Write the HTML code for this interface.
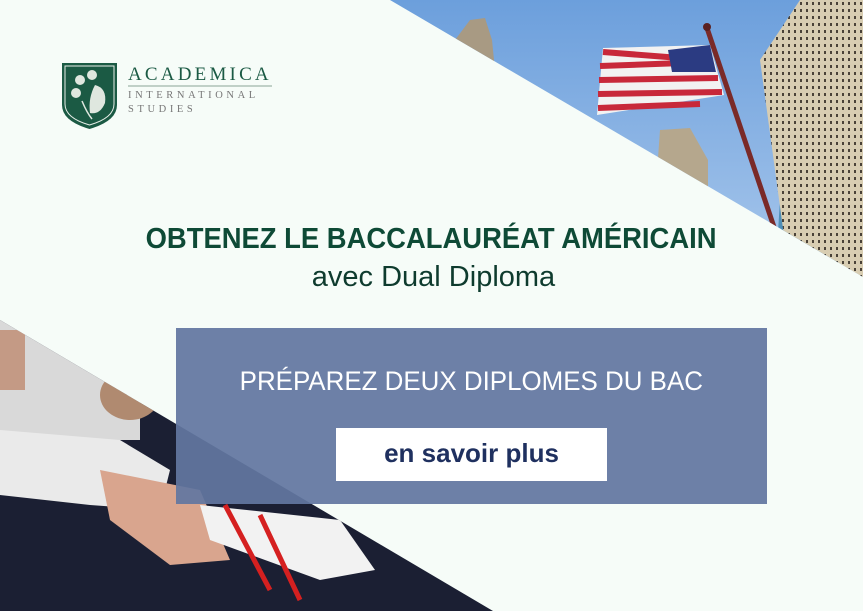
<!DOCTYPE html>
<html><head><meta charset="utf-8"><style>
html,body{margin:0;padding:0}
body{width:863px;height:611px;position:relative;overflow:hidden;background:#f6fcf8;font-family:"Liberation Sans",sans-serif}
.abs{position:absolute}
</style></head><body>
<svg class="abs" style="left:0;top:0" width="863" height="611" viewBox="0 0 863 611">
<defs>
<clipPath id="tr"><polygon points="390,0 863,0 863,277"/></clipPath>
<clipPath id="bl"><polygon points="0,320 0,611 493,611"/></clipPath>
<linearGradient id="sky" x1="0" y1="0" x2="0" y2="1"><stop offset="0" stop-color="#6c9fdc"/><stop offset="1" stop-color="#a9c8ec"/></linearGradient>
<pattern id="win" width="6" height="7" patternUnits="userSpaceOnUse"><rect width="6" height="7" fill="#d8cdb2"/><rect x="2" y="2" width="2" height="3" fill="#4a4238"/></pattern>
</defs>
<g clip-path="url(#tr)">
<rect x="390" y="0" width="473" height="280" fill="url(#sky)"/>
<polygon points="455,40 470,20 485,18 492,40 495,70 455,70" fill="#a89a83"/>
<polygon points="660,130 690,128 708,160 708,200 655,200" fill="#b5a78d"/>
<polygon points="780,200 830,195 840,280 775,280" fill="#4f8fb8"/>
<polygon points="760,60 800,0 863,0 863,280 790,280" fill="url(#win)"/>
<line x1="707" y1="28" x2="775" y2="230" stroke="#7a2a28" stroke-width="5"/>
<circle cx="707" cy="27" r="4" fill="#5a2020"/>
<g>
<polygon points="603,48 710,45 724,95 597,115" fill="#f2f2f2"/>
<path d="M603,52 L680,58 M600,66 L710,62 M599,80 L718,78 M598,94 L722,92 M598,108 L700,104" stroke="#c8283a" stroke-width="6" fill="none"/>
<polygon points="668,50 710,45 716,72 672,72" fill="#2b3b82"/>
</g>
</g>
<g clip-path="url(#bl)">
<rect x="0" y="320" width="493" height="291" fill="#1b1f33"/>
<rect x="0" y="320" width="140" height="120" fill="#d9d9d9"/>
<ellipse cx="130" cy="395" rx="30" ry="25" fill="#b08a70"/>
<polygon points="0,430 120,440 170,470 160,510 90,505 0,495" fill="#eaeaea"/>
<polygon points="100,470 200,490 230,560 170,565 110,520" fill="#d9a58e"/>
<polygon points="200,505 340,520 375,570 320,580 210,540" fill="#f2f2f2"/>
<path d="M225,505 L270,590 M260,515 L300,600" stroke="#d52020" stroke-width="5"/>
<rect x="0" y="330" width="25" height="60" fill="#c49a85"/>
</g>
<rect x="176" y="328" width="591" height="176" fill="#6276a0" fill-opacity="0.93"/>
<rect x="336" y="428" width="271" height="53" fill="#ffffff"/>
<g transform="translate(62,63)">
<path d="M0,0 H55 V42 Q55,58 27.5,66 Q0,58 0,42 Z" fill="#1b5a44"/>
<path d="M3,3 H52 V41 Q52,55 27.5,62 Q3,55 3,41 Z" fill="none" stroke="#e8efe9" stroke-width="1"/>
<circle cx="18" cy="17" r="5" fill="#dfe7df"/><circle cx="30" cy="12" r="5" fill="#dfe7df"/><circle cx="14" cy="30" r="5" fill="#dfe7df"/>
<path d="M33,22 Q45,25 43,40 Q38,52 28,50 Q26,35 33,22Z" fill="#dfe7df"/>
<path d="M20,38 Q25,50 30,56" stroke="#dfe7df" stroke-width="1.5" fill="none"/>
</g>
<line x1="128" y1="86" x2="272" y2="86" stroke="#8aa596" stroke-width="1"/>
</svg>
<div class="abs" style="left:128px;top:64px;font-family:'Liberation Serif',serif;font-size:19px;letter-spacing:3.2px;color:#1b5a44">ACADEMICA</div>
<div class="abs" style="left:128px;top:90px;font-family:'Liberation Serif',serif;font-size:10.5px;letter-spacing:3.6px;color:#777">INTERNATIONAL</div>
<div class="abs" style="left:128px;top:104px;font-family:'Liberation Serif',serif;font-size:10.5px;letter-spacing:3.6px;color:#777">STUDIES</div>
<div class="abs" style="left:0;top:223px;width:863px;text-align:center"><span style="display:inline-block;font-weight:bold;font-size:29px;color:#0e4a36;transform:scaleX(0.945);margin-left:0px">OBTENEZ LE BACCALAURÉAT AMÉRICAIN</span></div>
<div class="abs" style="left:0;top:261px;width:863px;text-align:center;font-size:29px;color:#0e3b2e;padding-left:2px">avec Dual Diploma</div>
<div class="abs" style="left:176px;top:366px;width:591px;text-align:center"><span style="display:inline-block;font-size:27px;color:#fff;transform:scaleX(0.96)">PRÉPAREZ DEUX DIPLOMES DU BAC</span></div>
<div class="abs" style="left:336px;top:438px;width:271px;text-align:center;font-weight:bold;font-size:26px;color:#1f305f">en savoir plus</div>
</body></html>
